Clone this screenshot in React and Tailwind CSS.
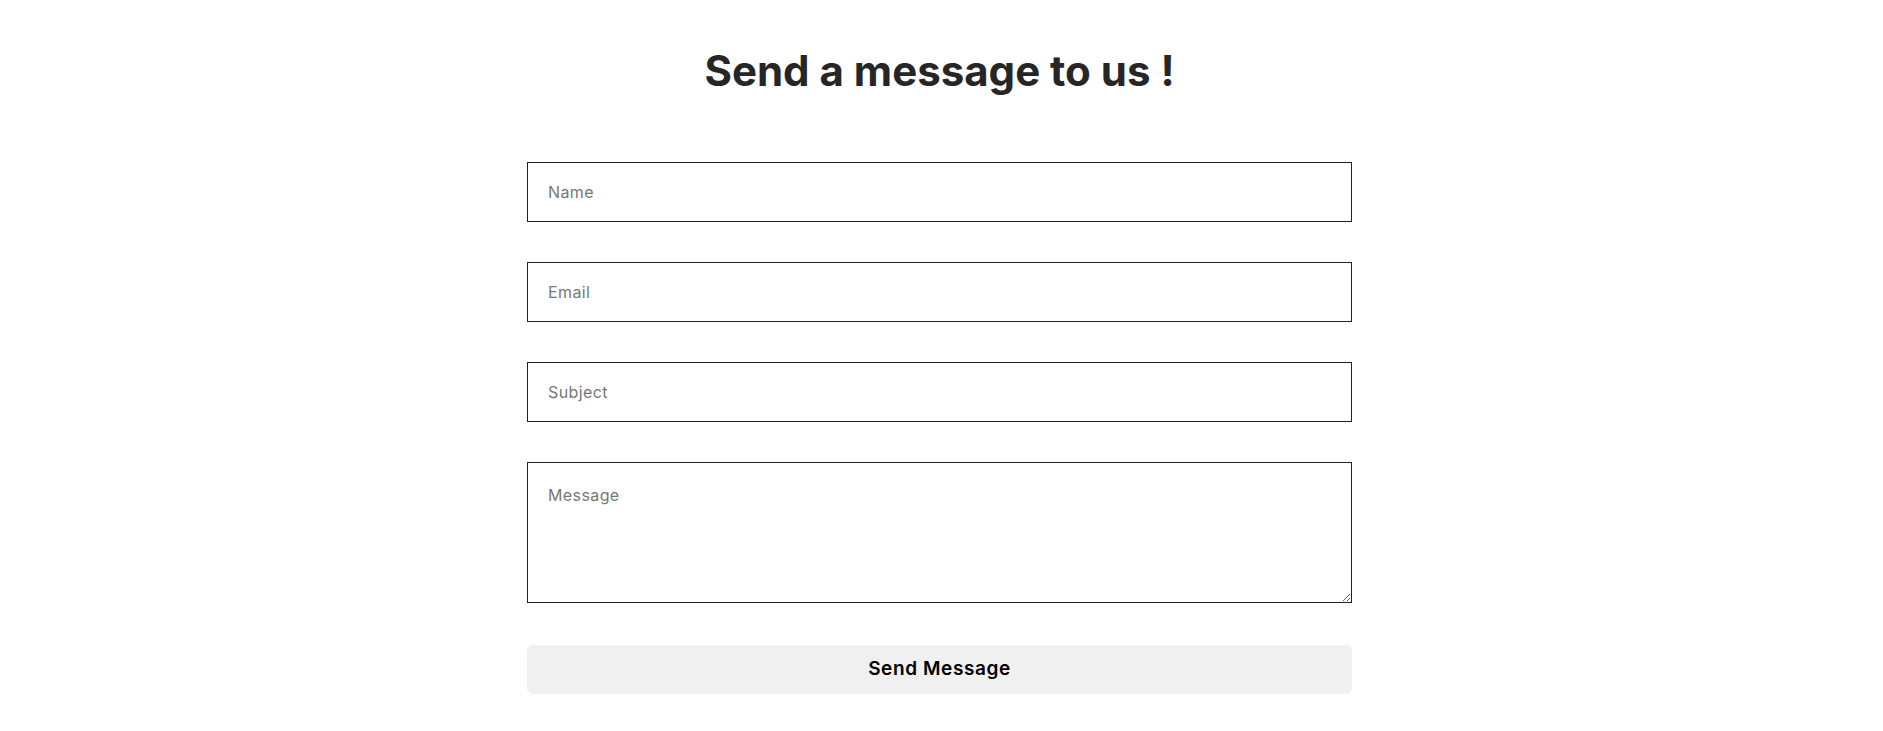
function App() {
  return (
    <div className="min-h-screen bg-white pr-[4px] font-['Inter','Liberation_Sans',sans-serif]">
      <div className="mx-auto w-[825px] pt-[43px]">
        <h2 className="text-center text-[42px] leading-[56px] font-bold text-[#262626]">
          Send a message to us !
        </h2>
        <form className="mt-[63px] flex flex-col gap-[40px]" onSubmit={(e) => e.preventDefault()}>
          <input
            type="text"
            placeholder="Name"
            className="h-[60px] w-full border border-[#222] bg-white px-5 text-[16px] tracking-[0.4px] text-[#222] placeholder:text-[#777] outline-none"
          />
          <input
            type="email"
            placeholder="Email"
            className="h-[60px] w-full border border-[#222] bg-white px-5 text-[16px] tracking-[0.4px] text-[#222] placeholder:text-[#777] outline-none"
          />
          <input
            type="text"
            placeholder="Subject"
            className="h-[60px] w-full border border-[#222] bg-white px-5 text-[16px] tracking-[0.4px] text-[#222] placeholder:text-[#777] outline-none"
          />
          <textarea
            placeholder="Message"
            className="block h-[141px] w-full border border-[#222] bg-white px-5 pt-[20px] text-[16px] leading-6 tracking-[0.4px] text-[#222] placeholder:text-[#777] outline-none"
          />
          <button
            type="submit"
            className="mt-[2px] h-[49px] w-full rounded-md bg-[#f0f0f0] text-[19px] font-semibold tracking-[0.6px] text-black"
          >
            Send Message
          </button>
        </form>
      </div>
    </div>
  );
}

export default App;
